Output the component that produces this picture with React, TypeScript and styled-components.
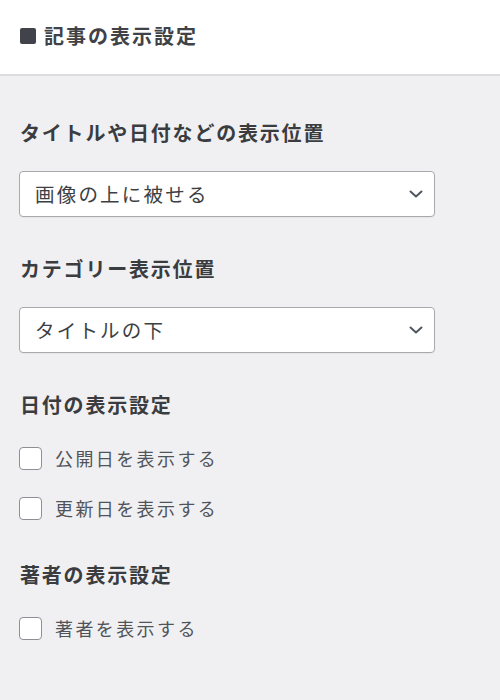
import React from "react";
import styled, { createGlobalStyle } from "styled-components";

const GlobalStyle = createGlobalStyle`
  html, body {
    margin: 0;
    padding: 0;
    background: #f0f0f2;
  }
  body {
    font-family: "Noto Sans CJK JP", "Noto Sans", sans-serif;
    color: #3c3c3c;
  }
`;

const Page = styled.div`
  width: 500px;
  min-height: 700px;
  background: #f0f0f2;
`;

const Header = styled.header`
  height: 76px;
  background: #ffffff;
  border-bottom: 2px solid #dcdcde;
  display: flex;
  align-items: center;
  padding: 0 0 2px 20px;
  box-sizing: border-box;
  gap: 8px;
`;

const HeaderMark = styled.span`
  width: 16px;
  height: 16px;
  border-radius: 2px;
  background: #40444a;
  flex: none;
`;

const HeaderTitle = styled.h2`
  margin: 0;
  font-size: 20px;
  font-weight: 700;
  letter-spacing: 2px;
  color: #3f4247;
  line-height: 28px;
`;

const Body = styled.div`
  padding: 43px 65px 40px 19px;
  display: flex;
  flex-direction: column;
  gap: 38px;
`;

const Section = styled.section`
  display: flex;
  flex-direction: column;
`;

const Label = styled.div`
  font-size: 20px;
  font-weight: 700;
  letter-spacing: 1.8px;
  line-height: 28px;
  color: #3a3c40;
  padding-left: 1px;
  margin-bottom: 24px;
`;

const SelectBox = styled.div`
  height: 46px;
  box-sizing: border-box;
  background: #ffffff;
  border: 1px solid #a7aaad;
  border-radius: 4px;
  display: flex;
  align-items: center;
  justify-content: space-between;
  padding: 0 11px 0 15px;
  box-shadow: 0 1px 1px rgba(0, 0, 0, 0.04);
`;

const SelectText = styled.span`
  font-size: 19.5px;
  letter-spacing: 2.2px;
  color: #3c3f44;
  line-height: 28px;
`;

const Chevron = styled.svg`
  width: 14px;
  height: 14px;
  flex: none;
`;

const CheckList = styled.div`
  display: flex;
  flex-direction: column;
  gap: 20px;
`;

const CheckRow = styled.label`
  display: flex;
  align-items: center;
  gap: 13px;
  height: 30px;
`;

const Box = styled.span`
  width: 23px;
  height: 23px;
  box-sizing: border-box;
  border: 1.5px solid #8c8f94;
  border-radius: 4px;
  background: #ffffff;
  flex: none;
`;

const CheckText = styled.span`
  font-size: 18px;
  letter-spacing: 2.4px;
  color: #50545a;
  line-height: 28px;
`;

const Select: React.FC<{ value: string }> = ({ value }) => (
  <SelectBox>
    <SelectText>{value}</SelectText>
    <Chevron viewBox="0 0 14 14">
      <path
        d="M1.5 4.5 L7 9.5 L12.5 4.5"
        fill="none"
        stroke="#50575e"
        strokeWidth="2"
        strokeLinecap="round"
        strokeLinejoin="round"
      />
    </Chevron>
  </SelectBox>
);

const Check: React.FC<{ text: string }> = ({ text }) => (
  <CheckRow>
    <Box />
    <CheckText>{text}</CheckText>
  </CheckRow>
);

export default function App() {
  return (
    <>
      <GlobalStyle />
      <Page>
        <Header>
          <HeaderMark />
          <HeaderTitle>記事の表示設定</HeaderTitle>
        </Header>
        <Body>
          <Section>
            <Label>タイトルや日付などの表示位置</Label>
            <Select value="画像の上に被せる" />
          </Section>
          <Section>
            <Label>カテゴリー表示位置</Label>
            <Select value="タイトルの下" />
          </Section>
          <Section>
            <Label>日付の表示設定</Label>
            <CheckList>
              <Check text="公開日を表示する" />
              <Check text="更新日を表示する" />
            </CheckList>
          </Section>
          <Section>
            <Label>著者の表示設定</Label>
            <CheckList>
              <Check text="著者を表示する" />
            </CheckList>
          </Section>
        </Body>
      </Page>
    </>
  );
}
